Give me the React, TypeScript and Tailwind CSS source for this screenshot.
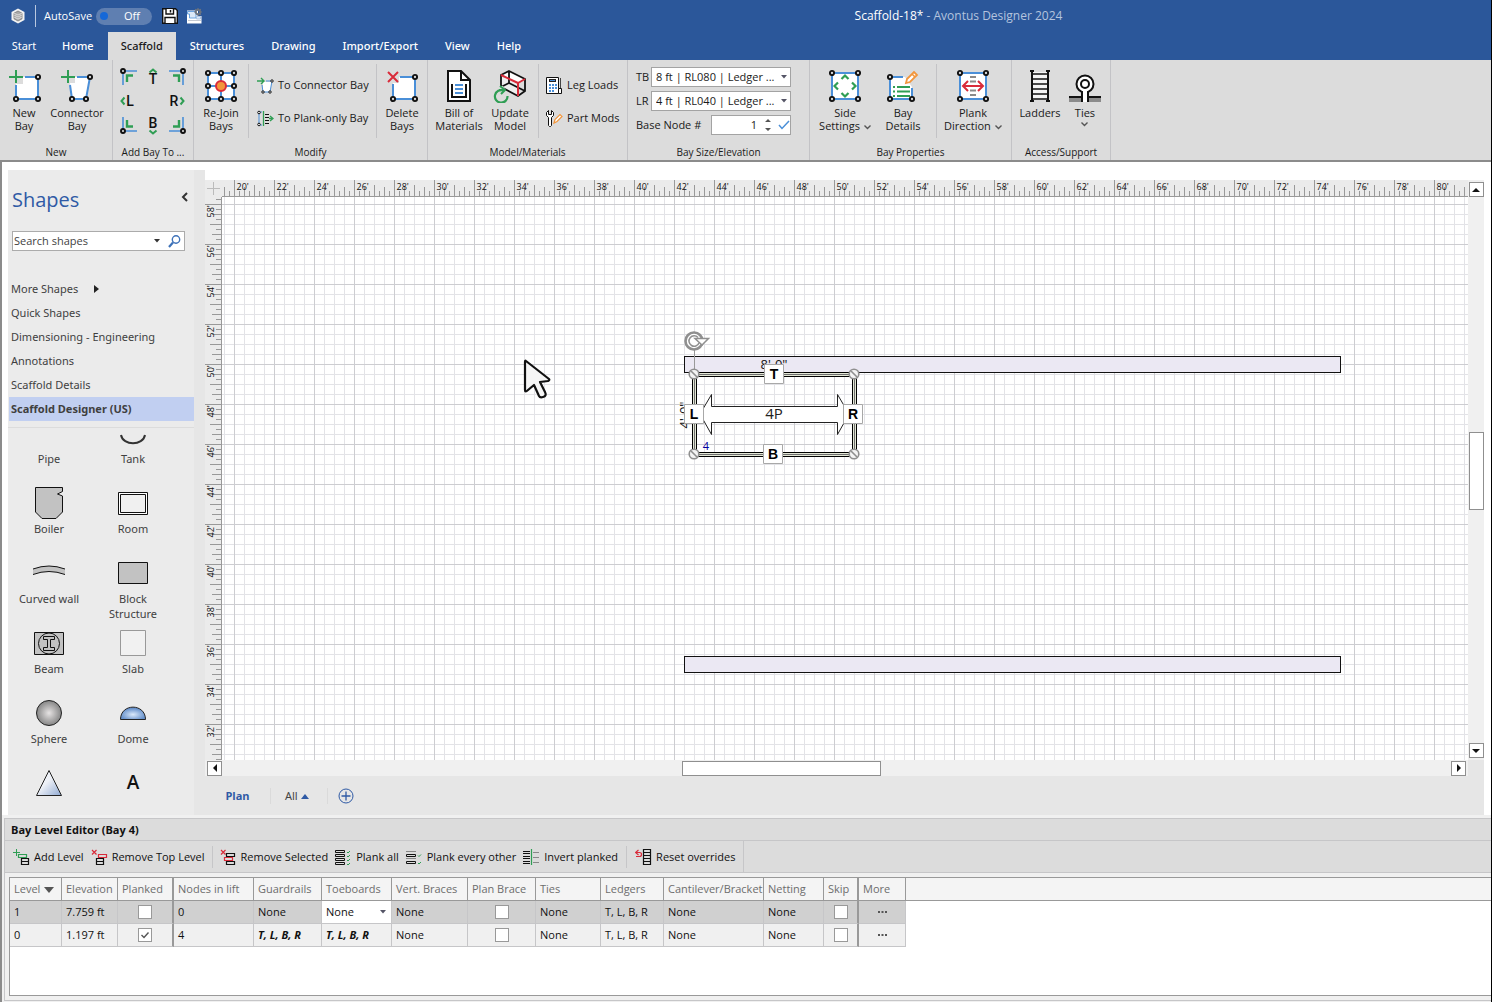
import { useState, type ReactNode } from 'react';
import clsx from 'clsx';

const BLUE = '#4a8fd8';
const GREEN = '#2f9e54';
const RED = '#d92b3a';
const ORANGE = '#f2963c';
const FONT = 'font-["Open_Sans","Noto_Sans",sans-serif]';
const WIDE_FONT = 'font-["Noto_Sans","Open_Sans",sans-serif]';

/* ---------- icons ---------- */

const Node = ({ x, y }: { x: number; y: number }) => (
    <circle cx={x} cy={y} r="2.1" fill="#dcdcdc" stroke="#111" strokeWidth="1.9" />
);

const Big = ({ children }: { children: ReactNode }) => (
    <svg width="36" height="34" viewBox="0 0 36 34" fill="none" aria-hidden="true">{children}</svg>
);

const Small = ({ children }: { children: ReactNode }) => (
    <svg width="17" height="17" viewBox="0 0 17 17" fill="none" className="shrink-0" aria-hidden="true">{children}</svg>
);

const NewBayIcon = () => (
    <Big>
        <path d="M10 8H32V30H10z" fill="#fff" />
        <path d="M19 8H32V30H10V16" stroke={BLUE} strokeWidth="2" />
        <path d="M2 0H17V15H2z" fill="#dcdcdc" />
        <path d="M10 1V14M3 8H17" stroke={GREEN} strokeWidth="2" />
        <Node x={32} y={8} /><Node x={10} y={30} /><Node x={32} y={30} />
    </Big>
);

const ConnectorBayIcon = () => (
    <Big>
        <path d="M10 8H31L27 30H13z" fill="#fff" />
        <path d="M18 8H31L27 30H13L11 16" stroke={BLUE} strokeWidth="2" />
        <path d="M0 0H16V14H0z" fill="#dcdcdc" />
        <path d="M9 1V14M2 8H16" stroke={GREEN} strokeWidth="2" />
        <Node x={31} y={8} /><Node x={13} y={30} /><Node x={27} y={30} />
    </Big>
);

const RejoinIcon = () => (
    <Big>
        <path d="M5 4H31V30H5z" fill="#fff" />
        <path d="M5 4H31V30H5zM18 4V30M5 17H31" stroke={BLUE} strokeWidth="2" />
        {[5, 18, 31].map(x => [4, 17, 30].map(y => <Node key={`${x}-${y}`} x={x} y={y} />))}
        <circle cx="18" cy="17" r="5" fill={ORANGE} stroke={RED} strokeWidth="2" />
    </Big>
);

const DeleteBaysIcon = () => (
    <Big>
        <path d="M9 8H31V30H9z" fill="#fff" />
        <path d="M16 8H31V30H9V15" stroke={BLUE} strokeWidth="2" />
        <path d="M2 1H15V14H2z" fill="#dcdcdc" />
        <path d="M4 3L14 13M14 3L4 13" stroke={RED} strokeWidth="2" />
        <Node x={31} y={8} /><Node x={9} y={30} /><Node x={31} y={30} />
    </Big>
);

const BillIcon = () => (
    <Big>
        <path d="M7 2H20L29 11V32H7z" fill="#fff" stroke="#111" strokeWidth="2" />
        <path d="M20 2V11H29" stroke="#111" strokeWidth="2" />
        <path d="M11 15V28H25V15" stroke="#111" strokeWidth="2" />
        <path d="M14 16H22M14 20H22M14 24H22" stroke={BLUE} strokeWidth="2" />
    </Big>
);

const UpdateIcon = () => (
    <Big>
        <path d="M9 6L17 2L33 10L26 14z" fill="#fff" />
        <path d="M9 6L26 14V27L9 18z" fill="#eee" />
        <path d="M17 2L33 10V22L26 27L9 18V6zM17 2V14L33 22M17 14L9 18" stroke="#111" strokeWidth="1.8" />
        <path d="M9 6L26 14V27M26 14L33 10" stroke={RED} strokeWidth="2" />
        <path d="M1 17H11L14 22V33H1z" fill="#dcdcdc" />
        <path d="M11.5 21.5A6.3 6.3 0 1 0 15.5 27" stroke={GREEN} strokeWidth="2.2" />
        <path d="M8 17L13 21L9 25M13 21H7" stroke={GREEN} strokeWidth="2" />
    </Big>
);

const Frame = () => (
    <>
        <path d="M5 4H31V30H5z" fill="#fff" stroke={BLUE} strokeWidth="2" />
        <Node x={5} y={4} /><Node x={31} y={4} /><Node x={5} y={30} /><Node x={31} y={30} />
    </>
);

const SideSettingsIcon = () => (
    <Big>
        <Frame />
        <path d="M14.5 10L18 6.5L21.5 10M14.5 24L18 27.5L21.5 24M11 13.5L7.5 17L11 20.5M25 13.5L28.5 17L25 20.5" stroke={GREEN} strokeWidth="2.2" />
    </Big>
);

const BayDetailsIcon = () => (
    <Big>
        <path d="M5 8H20L27 18V30H5z" fill="#fff" />
        <path d="M5 8H18M5 8V30H27V19" stroke={BLUE} strokeWidth="2" />
        <path d="M8 18H10M8 22.5H10M8 27H10M12 18H25M12 22.5H25M12 27H25" stroke={GREEN} strokeWidth="2" />
        <path d="M21 14L22 10L29 3L32 6L25 13z" fill="#fff" stroke={ORANGE} strokeWidth="1.8" />
        <path d="M27 5L30 8" stroke={ORANGE} strokeWidth="1.6" />
        <Node x={5} y={8} /><Node x={5} y={30} /><Node x={27} y={30} />
    </Big>
);

const PlankDirectionIcon = () => (
    <Big>
        <Frame />
        <path d="M15 8H21M15 12.5H21M15 21.5H21M15 26H21" stroke="#8a8a8a" strokeWidth="2" />
        <path d="M9 17H27M13 12L8 17L13 22M23 12L28 17L23 22" stroke={RED} strokeWidth="2" />
    </Big>
);

const LadderIcon = () => (
    <Big>
        <path d="M10 3H26V31H10z" fill="#f4f4f4" />
        <path d="M10 2V32M26 2V32M8 2H12M24 2H28M8 32H12M24 32H28" stroke="#111" strokeWidth="2" />
        <path d="M10 5H26M10 10H26M10 15H26M10 20H26M10 25H26M10 30H26" stroke="#111" strokeWidth="1.6" />
    </Big>
);

const TiesIcon = () => (
    <Big>
        <path d="M2 27H34V33H2z" fill="#8b8b8b" />
        <path d="M2 28H34" stroke="#111" strokeWidth="2" />
        <circle cx="18" cy="15" r="8.5" fill="#fff" stroke="#111" strokeWidth="2" />
        <circle cx="18" cy="15" r="4" stroke="#111" strokeWidth="2" />
        <path d="M15 23V33M21 23V33" stroke="#111" strokeWidth="2" />
        <path d="M16 22H20V33H16z" fill="#fff" />
    </Big>
);

const ToConnectorIcon = () => (
    <Small>
        <path d="M6 5H15L13 15H6z" fill="#fff" />
        <path d="M9 4H15L13 15H6L5 8" stroke={BLUE} />
        <path d="M0 4H7M4 1L7 4L4 7" stroke={GREEN} strokeWidth="1.4" />
        {[[15, 4], [13, 15], [6, 15]].map(([x, y]) => (
            <circle key={x} cx={x} cy={y} r="1.2" fill="#fff" stroke="#111" />
        ))}
    </Small>
);

const ToPlankIcon = () => (
    <Small>
        <path d="M2 3V14M2 2H5M2 15H5" stroke={BLUE} />
        <path d="M6.5 1V16M12 8.5H16M13 6L16 8.5L13 11" stroke={GREEN} strokeWidth="1.3" />
        <path d="M8 4.5H12M8 7.5H12M8 10.5H12M8 13.5H12" stroke="#111" />
        <circle cx="2" cy="2.5" r="1.3" fill="#fff" stroke="#111" />
        <circle cx="2" cy="14.5" r="1.3" fill="#fff" stroke="#111" />
    </Small>
);

const LegLoadsIcon = () => (
    <Small>
        <path d="M0.5 0.5H12.5V16.5H0.5z" fill="#fff" stroke="#111" />
        <path d="M3 3.5H10" stroke="#222" strokeWidth="3" />
        <path d="M4 3.5H9" stroke={BLUE} />
        <path d="M3 8H5M6 8H8M9 8H11M3 11H5M6 11H8M9 11H11M3 14H5M6 14H8" stroke={BLUE} strokeWidth="2" />
        <path d="M14.5 1V12" stroke="#444" />
        <path d="M12.5 11.5H15.5V16.5H12.5z" fill="#fff" stroke="#111" />
    </Small>
);

const PartModsIcon = () => (
    <Small>
        <path d="M2.5 0.5L0.5 2.5V5.5L2.5 7.5V15.5L3.5 16.5H4.5L5.5 15.5V7.5L7.5 5.5V2.5L5.5 0.5V4.5H2.5z" fill="#fff" stroke="#111" />
        <path d="M8 13L9 9.5L14 4.5L16 6.5L11 11.5z" fill="#fff" stroke={ORANGE} strokeWidth="1.2" />
    </Small>
);

const Corner = ({ fx, fy }: { fx: number; fy: number }) => (
    <svg width="18" height="18" viewBox="-9 -9 18 18" fill="none" aria-hidden="true">
        <g transform={`scale(${fx} ${fy})`}>
            <path d="M-5 -6H8M-6 -5V8" stroke={BLUE} strokeWidth="1.6" />
            <path d="M-2 5V-1.5H4" stroke={GREEN} strokeWidth="2.4" />
            <circle cx="-6" cy="-6" r="2" fill="#dcdcdc" stroke="#111" strokeWidth="1.9" />
        </g>
    </svg>
);

const SideMark = ({ letter, x, y, caret }: { letter: string; x: number; y: number; caret: string }) => (
    <svg width="18" height="18" viewBox="0 0 18 18" fill="none" className="overflow-visible" aria-hidden="true">
        <text x={x} y={y} fontSize="14" textAnchor="middle" fill="#111" className='font-["Roboto",sans-serif] font-medium'>{letter}</text>
        <path d={caret} stroke={GREEN} strokeWidth="2" />
    </svg>
);

const Chevron = () => (
    <svg width="7" height="5" viewBox="0 0 7 5" fill="none" className="inline-block" aria-hidden="true">
        <path d="M0.5 0.5L3.5 3.5L6.5 0.5" stroke="#555" strokeWidth="1.4" />
    </svg>
);

const Caret = ({ className }: { className: string }) => (
    <svg width="6" height="4" viewBox="0 0 6 4" className={clsx('pointer-events-none absolute', className)} aria-hidden="true">
        <path d="M0 0H6L3 3.5z" fill="#555566" />
    </svg>
);

const AddLevelIcon = () => (
    <Small>
        <path d="M0 3.5H7M3.5 0V7" stroke={GREEN} />
        <path d="M5.5 5.5H13.5V8.5H5.5z" stroke={GREEN} strokeWidth="1.2" />
        <path d="M8.5 9.5H15.5V12.5H8.5zM8.5 12.5H15.5V15.5H8.5z" stroke="#111" strokeWidth="1.2" />
    </Small>
);

const RemoveTopIcon = () => (
    <Small>
        <path d="M1 1L5.5 5.5M5.5 1L1 5.5" stroke={RED} strokeWidth="1.2" />
        <path d="M7.5 5.5H15.5V8.5H7.5z" stroke={RED} strokeWidth="1.2" />
        <path d="M5.5 9.5H12.5V12.5H5.5zM5.5 12.5H12.5V15.5H5.5z" stroke="#111" strokeWidth="1.2" />
    </Small>
);

const RemoveSelectedIcon = () => (
    <Small>
        <path d="M1 1L5.5 5.5M5.5 1L1 5.5" stroke={RED} strokeWidth="1.2" />
        <path d="M6.5 4.5H14.5V7.5H6.5zM6.5 12.5H14.5V15.5H6.5z" stroke="#111" strokeWidth="1.2" />
        <path d="M4.5 8.5H12.5V11.5H4.5z" stroke={RED} strokeWidth="1.2" />
    </Small>
);

const PlankAllIcon = () => (
    <Small>
        <path d="M0.5 1.5H9.5V3.5H0.5zM0.5 5.5H9.5V7.5H0.5zM0.5 9.5H9.5V11.5H0.5zM0.5 13.5H9.5V15.5H0.5z" stroke="#111" />
        <path d="M12 3L13 4L15 2M12 7L13 8L15 6M12 11L13 12L15 10M12 15L13 16L15 14" stroke={GREEN} />
    </Small>
);

const PlankOtherIcon = () => (
    <Small>
        <path d="M0 2.5H10M0 9.5H10" stroke="#888" />
        <path d="M0.5 5.5H9.5V7.5H0.5zM0.5 12.5H9.5V14.5H0.5z" stroke="#111" />
        <path d="M12 6.5L13 7.5L15 5.5M12 14L13 15L15 13" stroke={GREEN} />
    </Small>
);

const InvertIcon = () => (
    <Small>
        <path d="M0 2.5H7M0 4.5H7M0 7.5H7M0 9.5H7M0 12.5H7M0 14.5H7" stroke="#111" strokeWidth="1.1" />
        <path d="M8.5 0V16" stroke={GREEN} strokeWidth="1.2" />
        <path d="M10 3.5H16M10 8.5H16M10 13.5H16" stroke="#888" />
    </Small>
);

const ResetIcon = () => (
    <Small>
        <path d="M0.5 3.5H4.5Q6.5 3.5 6.5 5.5Q6.5 7.5 4.5 7.5H1M3.5 1L0.5 3.5L3.5 6" stroke={RED} strokeWidth="1.2" />
        <path d="M8.5 0.5H15.5V15.5H8.5zM8.5 3.5H15.5M8.5 6.5H15.5M8.5 9.5H15.5M8.5 12.5H15.5" stroke="#111" strokeWidth="1.2" />
    </Small>
);

/* ---------- ribbon ---------- */

const Group = ({ label, width, children }: { label: string; width: string; children: ReactNode }) => (
    <section aria-label={label} className={clsx('flex shrink-0 flex-col border-r border-[#c3c3c6]', width)}>
        <div className="flex h-[84px] items-start pt-1">{children}</div>
        <div className="text-center text-[10px] leading-4">{label}</div>
    </section>
);

const Rule = () => <div className="h-[74px] w-px shrink-0 bg-[#c3c3c6]" />;

const BigButton = ({ icon, lines, width, menu }: { icon: ReactNode; lines: string[]; width: string; menu?: boolean }) => (
    <button className={clsx('flex shrink-0 flex-col items-center pt-[5px] whitespace-nowrap', width)}>
        {icon}
        <span className="mt-[3px] leading-[13px]">
            {lines.map((line, i) => (
                <span key={line} className="block">
                    {line}
                    {menu && i === lines.length - 1 && lines.length > 1 && <span className="ml-1"><Chevron /></span>}
                </span>
            ))}
            {menu && lines.length === 1 && <span className="block leading-2"><Chevron /></span>}
        </span>
    </button>
);

const RowButton = ({ icon, label }: { icon: ReactNode; label: string }) => (
    <button className="flex h-[33px] items-center gap-1 whitespace-nowrap">
        {icon}
        {label}
    </button>
);

const Ribbon = () => (
    <div className="flex h-[102px] shrink-0 overflow-hidden border-b-2 border-[#8b8b8b] bg-[#dcdcdc] text-[11px] text-[#1a1a1a]">
        <Group label="New" width="w-[113px]">
            <BigButton icon={<NewBayIcon />} lines={['New', 'Bay']} width="w-[48px]" />
            <BigButton icon={<ConnectorBayIcon />} lines={['Connector', 'Bay']} width="w-[58px]" />
        </Group>
        <Group label="Add Bay To ..." width="w-[81px]">
            <div className="grid w-full grid-cols-3 gap-x-1.5 gap-y-1.5 px-[7px] pt-1">
                <button aria-label="Top left"><Corner fx={1} fy={1} /></button>
                <button aria-label="Top"><SideMark letter="T" x={9} y={16} caret="M5.5 4.5L9 1.5L12.5 4.5" /></button>
                <button aria-label="Top right"><Corner fx={-1} fy={1} /></button>
                <button aria-label="Left"><SideMark letter="L" x={10} y={14} caret="M4.5 5.5L1.5 9L4.5 12.5" /></button>
                <span />
                <button aria-label="Right"><SideMark letter="R" x={6} y={14} caret="M12.5 5.5L15.5 9L12.5 12.5" /></button>
                <button aria-label="Bottom left"><Corner fx={1} fy={-1} /></button>
                <button aria-label="Bottom"><SideMark letter="B" x={9} y={12} caret="M5.5 14.5L9 17.5L12.5 14.5" /></button>
                <button aria-label="Bottom right"><Corner fx={-1} fy={-1} /></button>
            </div>
        </Group>
        <Group label="Modify" width="w-[234px]">
            <BigButton icon={<RejoinIcon />} lines={['Re-Join', 'Bays']} width="w-[54px]" />
            <Rule />
            <div className="flex w-[127px] flex-col pt-[5px] pl-2">
                <RowButton icon={<ToConnectorIcon />} label="To Connector Bay" />
                <RowButton icon={<ToPlankIcon />} label="To Plank-only Bay" />
            </div>
            <Rule />
            <BigButton icon={<DeleteBaysIcon />} lines={['Delete', 'Bays']} width="w-[50px]" />
        </Group>
        <Group label="Model/Materials" width="w-[200px]">
            <BigButton icon={<BillIcon />} lines={['Bill of', 'Materials']} width="w-[62px]" />
            <BigButton icon={<UpdateIcon />} lines={['Update', 'Model']} width="w-[40px]" />
            <div className="w-2" />
            <Rule />
            <div className="flex flex-col pt-[5px] pl-[7px]">
                <RowButton icon={<LegLoadsIcon />} label="Leg Loads" />
                <RowButton icon={<PartModsIcon />} label="Part Mods" />
            </div>
        </Group>
        <Group label="Bay Size/Elevation" width="w-[182px]">
            <div className="flex w-full flex-col gap-1 pt-[3px] pr-[18px] pl-2">
                {[['TB', '8 ft | RL080 | Ledger ...'], ['LR', '4 ft | RL040 | Ledger ...']].map(([id, text]) => (
                    <div key={id} className="flex h-5 items-center justify-between">
                        <label htmlFor={id}>{id}</label>
                        <div className="relative">
                            <select id={id} className="block h-5 w-[140px] appearance-none border border-[#a3a3a3] bg-white pl-1">
                                <option>{text}</option>
                            </select>
                            <Caret className="top-2 right-1" />
                        </div>
                    </div>
                ))}
                <div className="flex h-5 items-center justify-between">
                    <label htmlFor="node">Base Node #</label>
                    <div className="flex h-5 w-[80px] items-center border border-[#a3a3a3] bg-white">
                        <input id="node" defaultValue="1" className="w-[45px] bg-transparent text-right outline-none" />
                        <svg width="6" height="12" viewBox="0 0 6 12" className="ml-2" aria-hidden="true">
                            <path d="M0 3H6L3 0zM0 9H6L3 12z" fill="#555" />
                        </svg>
                        <svg width="12" height="10" viewBox="0 0 12 10" className="ml-[7px]" fill="none" aria-hidden="true">
                            <path d="M1 5L4 8.5L11 1" stroke={BLUE} strokeWidth="1.5" />
                        </svg>
                    </div>
                </div>
            </div>
        </Group>
        <Group label="Bay Properties" width="w-[202px]">
            <BigButton icon={<SideSettingsIcon />} lines={['Side', 'Settings']} width="w-[70px]" menu />
            <BigButton icon={<BayDetailsIcon />} lines={['Bay', 'Details']} width="w-[46px]" />
            <div className="w-2.5" />
            <Rule />
            <BigButton icon={<PlankDirectionIcon />} lines={['Plank', 'Direction']} width="w-[72px]" menu />
        </Group>
        <Group label="Access/Support" width="w-[99px]">
            <BigButton icon={<LadderIcon />} lines={['Ladders']} width="w-[56px]" />
            <BigButton icon={<TiesIcon />} lines={['Ties']} width="w-[34px]" menu />
        </Group>
    </div>
);

const TitleBar = () => (
    <header className="flex h-8 shrink-0 items-center bg-[#2b579a] text-[11px] text-white">
        <div className="flex w-[426px] shrink-0 items-center pl-2.5">
            <svg width="16" height="16" viewBox="0 0 16 16" aria-hidden="true">
                <path d="M8 0.5L14.5 4V12L8 15.5L1.5 12V4z" fill="#f2f2f2" />
                <path d="M8 3L12 5.2V10.8L8 13L4 10.8V5.2z" fill="#a9a9a9" stroke="#777" strokeWidth="0.8" />
                <path d="M4 7L8 9L12 7M4 9L8 11L12 9M4 5.2L8 7L12 5.2" stroke="#eee" strokeWidth="0.7" fill="none" />
            </svg>
            <div className="mr-2 ml-[9px] h-[22px] w-px bg-[#b9c8e0]" />
            <label htmlFor="autosave" className="mr-1">AutoSave</label>
            <span className="relative inline-flex h-[17px] w-14 items-center rounded-full bg-[#5f7fb1]">
                <input id="autosave" type="checkbox" role="switch" className="absolute inset-0 h-full w-full opacity-0" />
                <span className="ml-1 h-2 w-2 rounded-full bg-[#1668d8]" />
                <span className="ml-4">Off</span>
            </span>
            <button aria-label="Save" className="ml-2.5">
                <svg width="16" height="16" viewBox="0 0 16 16" aria-hidden="true">
                    <path d="M0.7 0.7H13.5L15.3 2.5V15.3H0.7z" fill="#fff" stroke="#111" strokeWidth="1.4" />
                    <path d="M4 1V6H11.5V1M3 15V9.5H13V15" fill="#fff" stroke="#111" strokeWidth="1.4" />
                    <path d="M8.5 2V4.5" stroke="#111" strokeWidth="1.5" />
                </svg>
            </button>
            <button aria-label="Page settings" className="ml-2">
                <svg width="17" height="17" viewBox="0 0 17 17" fill="none" aria-hidden="true">
                    <path d="M1 2.5H12V8H15.5V15.5H1z" fill="#fff" />
                    <path d="M1.5 3.5H10V10H3.5V6H1.5z" fill="#dbe8f7" stroke={BLUE} strokeWidth="0.8" />
                    <path d="M2 12.5H15" stroke="#c4c9d2" />
                    <path d="M10.5 8.5H14.5V11H10.5z" fill="#dbe8f7" stroke="#9db9dd" strokeWidth="0.8" />
                    <circle cx="12" cy="4" r="2.2" stroke="#6d747f" strokeWidth="1.8" />
                    <path d="M12 0V2M12 6V8M8 4H10M14 4H16M9.2 1.2L10.5 2.5M13.5 5.5L14.8 6.8M14.8 1.2L13.5 2.5" stroke="#6d747f" strokeWidth="1.2" />
                </svg>
            </button>
        </div>
        <h1 className="flex-1 text-center text-xs">
            Scaffold-18* <span className="text-[#b4c4de]">- Avontus Designer 2024</span>
        </h1>
    </header>
);

const TABS = ['Home', 'Scaffold', 'Structures', 'Drawing', 'Import/Export', 'View', 'Help'];

const TabStrip = () => {
    const [active, setActive] = useState('Scaffold');
    return (
        <nav className={clsx('flex h-7 shrink-0 gap-px bg-[#2b579a] text-[11px] font-medium text-white', WIDE_FONT)}>
            <button className="w-12 font-normal">Start</button>
            {TABS.map(tab => (
                <button
                    key={tab}
                    onClick={() => setActive(tab)}
                    className={clsx('px-[13px]', active === tab && 'bg-[#dcdcdc] text-[#1a1a1a]')}
                >
                    {tab}
                </button>
            ))}
        </nav>
    );
};

/* ---------- shapes panel ---------- */

const STENCILS = ['Quick Shapes', 'Dimensioning - Engineering', 'Annotations', 'Scaffold Details', 'Scaffold Designer (US)'];

const Glyph = ({ children }: { children?: ReactNode }) => (
    <svg width="36" height="36" viewBox="0 0 36 36" fill="none" className="block" aria-hidden="true">{children}</svg>
);

const SHAPES: { label: string; icon: ReactNode }[] = [
    {
        label: 'Boiler',
        icon: <Glyph><path d="M4.5 2.5H31.5V6.5L26.5 9L31.5 11V27L25 33.5H11L4.5 27z" fill="#c2c2c2" stroke="#111" /></Glyph>,
    },
    {
        label: 'Room',
        icon: <Glyph><path d="M3.5 7.5H32.5V29.5H3.5z" fill="#fff" stroke="#111" /><path d="M5.5 9.5H30.5V27.5H5.5z" fill="#f0f0f0" stroke="#111" /></Glyph>,
    },
    {
        label: 'Curved wall',
        icon: <Glyph><path d="M2 14Q18 8 34 14V19.5Q18 13.5 2 19.5z" fill="#c2c2c2" /><path d="M2 14Q18 8 34 14M2 19.5Q18 13.5 34 19.5" stroke="#111" /></Glyph>,
    },
    {
        label: 'Block Structure',
        icon: <Glyph><path d="M3.5 7.5H32.5V28.5H3.5z" fill="#c2c2c2" stroke="#111" /></Glyph>,
    },
    {
        label: 'Beam',
        icon: (
            <Glyph>
                <path d="M3.5 7.5H32.5V29.5H3.5z" fill="#c2c2c2" stroke="#111" />
                <circle cx="18" cy="18.5" r="10.5" stroke="#111" />
                <path d="M12.5 11.5H23.5V14.5H19.5V22.5H23.5V25.5H12.5V22.5H16.5V14.5H12.5z" stroke="#111" />
            </Glyph>
        ),
    },
    {
        label: 'Slab',
        icon: <Glyph><path d="M5.5 5.5H30.5V30.5H5.5z" fill="#f1f1f1" stroke="#999" /></Glyph>,
    },
    {
        label: 'Sphere',
        icon: <Glyph><circle cx="18" cy="18" r="12.5" fill="url(#sphere)" stroke="#222" /></Glyph>,
    },
    {
        label: 'Dome',
        icon: <Glyph><path d="M5.5 24.5C5.5 8 30.5 8 30.5 24.5z" fill="url(#dome)" stroke="#222" /></Glyph>,
    },
    {
        label: '',
        icon: <Glyph><path d="M18 5.5L30.5 30.5H5.5z" fill="url(#cone)" stroke="#222" /></Glyph>,
    },
    {
        label: '',
        icon: <Glyph><text x="18" y="24" textAnchor="middle" fontSize="19" fill="#111" className='font-["Open_Sans",sans-serif] font-semibold'>A</text></Glyph>,
    },
];

const ShapesPanel = () => {
    const [active, setActive] = useState('Scaffold Designer (US)');
    return (
        <aside className="flex w-[197px] shrink-0 flex-col border-r-[11px] border-[#e6e6e6] bg-[#ebebeb] text-[11px] text-[#3f3f3f]">
            <div className="flex items-start justify-between pt-4 pr-1.5 pl-1">
                <h2 className="text-[20px] leading-7 text-[#2f5aa5]">Shapes</h2>
                <button aria-label="Collapse" className="pt-1.5">
                    <svg width="7" height="10" viewBox="0 0 7 10" fill="none" className="block"><path d="M6 1L2 5L6 9" stroke="#333" strokeWidth="2" /></svg>
                </button>
            </div>
            <div className="mt-[17px] mr-[9px] ml-[4px] flex h-5 items-center border border-[#ababab] bg-white">
                <input aria-label="Search shapes" defaultValue="Search shapes" className="min-w-0 flex-1 bg-transparent pl-px outline-none" />
                <svg width="6" height="4" viewBox="0 0 6 4" aria-hidden="true"><path d="M0 0H6L3 3.5z" fill="#333" /></svg>
                <button aria-label="Search" className="mr-[3px] ml-2">
                    <svg width="13" height="13" viewBox="0 0 13 13" fill="none" className="block">
                        <circle cx="8" cy="4.5" r="3.7" stroke="#3d71b8" strokeWidth="1.4" />
                        <path d="M5 7.5L1 12" stroke="#3d71b8" strokeWidth="2.2" />
                    </svg>
                </button>
            </div>
            <nav className={clsx('mt-[26px] flex flex-col border-b border-[#dcdcdc] pb-[6px]', WIDE_FONT)}>
                <button className="flex h-6 items-center gap-4 pl-[3px] text-left">
                    More Shapes
                    <svg width="5" height="8" viewBox="0 0 5 8" aria-hidden="true"><path d="M0 0L5 4L0 8z" fill="#222" /></svg>
                </button>
                {STENCILS.map(name => (
                    <button
                        key={name}
                        onClick={() => setActive(name)}
                        className={clsx('ml-px h-6 pl-[2px] text-left', active === name && 'bg-[#c1cff1] font-bold')}
                    >
                        {name}
                    </button>
                ))}
            </nav>
            <div className={clsx('grid flex-1 auto-rows-[70px] grid-cols-[82px_86px] content-start overflow-hidden pt-[6px] text-center leading-[15px] [grid-template-rows:51px]', WIDE_FONT)}>
                <div className="pt-[17px]">Pipe</div>
                <div className="flex flex-col items-center">
                    <svg width="28" height="17" viewBox="0 0 28 17" fill="none" aria-hidden="true">
                        <path d="M2 1C4 12 24 12 26 1" stroke="#333" strokeWidth="2" />
                    </svg>
                    Tank
                </div>
                {SHAPES.map(({ label, icon }, i) => (
                    <div key={i} className="flex flex-col items-center">
                        {icon}
                        <span className="w-[66px] text-center">{label}</span>
                    </div>
                ))}
            </div>
        </aside>
    );
};

/* ---------- drawing area ---------- */

const tickLength = (offset: number) => {
    if (offset % 40 === 0) return 17;
    if (offset % 20 === 0) return 12;
    if (offset % 10 === 0) return 10;
    return 6;
};

const TICKS = Array.from({ length: 520 }, (_, i) => (i - 8) * 5);
const FEET_ACROSS = Array.from({ length: 31 }, (_, i) => 20 + i * 2);
const FEET_DOWN = Array.from({ length: 14 }, (_, i) => 58 - i * 2);

const TopRuler = () => (
    <svg width="100%" height="17" className="block min-w-0 flex-1 bg-[#ebebeb]" aria-hidden="true">
        <g transform="translate(12.5 0)">
            <path d={TICKS.map(t => `M${t} 17V${17 - tickLength(t)}`).join('')} stroke="#999" />
            {FEET_ACROSS.map((feet, i) => (
                <text key={feet} x={i * 40 + 2} y="10" fontSize="9" fill="#111">{`${feet}'`}</text>
            ))}
        </g>
        <path d="M0 16.5H4000" stroke="#999" />
    </svg>
);

const SideRuler = () => (
    <svg width="17" height="100%" className="block shrink-0 bg-[#ebebeb]" aria-hidden="true">
        <g transform="translate(0 7.5)">
            <path d={TICKS.map(t => `M17 ${t}H${17 - tickLength(t)}`).join('')} stroke="#999" />
            {FEET_DOWN.map((feet, i) => (
                <text key={feet} transform={`translate(9 ${i * 40 + 13}) rotate(-90)`} fontSize="9" fill="#111">{`${feet}'`}</text>
            ))}
        </g>
        <path d="M16.5 0V4000" stroke="#999" />
    </svg>
);

const Handle = ({ x, y }: { x: number; y: number }) => (
    <g>
        <circle cx={x} cy={y} r="4.8" fill="#f4f4f4" stroke="#8f8f8f" strokeWidth="1.6" />
        <path d={`M${x - 3} ${y - 3}L${x + 3} ${y + 3}`} stroke="#8f8f8f" strokeWidth="1.6" />
    </g>
);

const SideTag = ({ x, y, letter }: { x: number; y: number; letter: string }) => (
    <g>
        <path d={`M${x - 9.5} ${y - 9.5}h19v19h-19z`} fill="#fff" stroke="#a8a8a8" />
        <text x={x} y={y + 5} fontSize="14" textAnchor="middle" fill="#000" className='font-["Liberation_Sans",sans-serif] font-bold'>{letter}</text>
    </g>
);

const Drawing = () => (
    <svg width="100%" height="100%" className="block min-w-0 flex-1 bg-white" aria-label="Plan drawing">
        <defs>
            <pattern id="minor" x="12" y="7" width="10" height="10" patternUnits="userSpaceOnUse">
                <path d="M0.5 0V10M0 0.5H10" stroke="#e3e3e7" />
            </pattern>
            <pattern id="major" x="12" y="7" width="40" height="40" patternUnits="userSpaceOnUse">
                <path d="M0.5 0V40M0 0.5H40" stroke="#cdcdd1" />
            </pattern>
        </defs>
        <rect width="100%" height="100%" fill="url(#minor)" />
        <rect width="100%" height="100%" fill="url(#major)" />

        <rect x="462.5" y="159.5" width="656" height="16" fill="#ebe8f3" stroke="#111" />
        <rect x="462.5" y="459.5" width="656" height="16" fill="#ebe8f3" stroke="#111" />

        <text x="552" y="172" fontSize="13" textAnchor="middle" fill="#111">8'-0"</text>
        <text transform="translate(467 218) rotate(-90)" fontSize="13" textAnchor="middle" fill="#111">4'-0"</text>
        <rect x="472.5" y="177.5" width="160" height="80" fill="none" stroke="#000" strokeWidth="5" />
        <rect x="472.5" y="177.5" width="160" height="80" fill="none" stroke="#e4e8d6" strokeWidth="3" />
        <rect x="472.5" y="177.5" width="160" height="80" fill="none" stroke="#6f6f6f" />
        <path d="M478 217L489.5 197.5V209.5H615.5V197.5L627 217L615.5 237.5V225.5H489.5V237.5z" fill="#fff" stroke="#222" />
        <text x="552" y="222" fontSize="15" textAnchor="middle" fill="#222">4P</text>
        <text x="484" y="253" fontSize="11" textAnchor="middle" fill="#0000a0">4</text>

        <path d="M472.5 153V172" stroke="#999" />
        <circle cx="472" cy="144" r="8.5" fill="#fff" stroke="#8f8f8f" strokeWidth="2.6" />
        <path d="M476 140.5A5.2 5.2 0 1 0 477 146" fill="none" stroke="#8f8f8f" strokeWidth="1.5" />
        <path d="M473 141.5H486.5L480 148z" fill="#fff" stroke="#8f8f8f" strokeWidth="1.5" />

        <Handle x={472} y={177} /><Handle x={632} y={177} /><Handle x={472} y={257} /><Handle x={632} y={257} />
        <SideTag x={552} y={177} letter="T" />
        <SideTag x={472} y={217} letter="L" />
        <SideTag x={631} y={217} letter="R" />
        <SideTag x={551} y={257} letter="B" />

        <path d="M304 164Q303 163 303 165V193Q303 196 306 193L312 188L317 199Q318 201 321 200Q325 199 323 195L318 185L326 184Q328 183 327 182z" fill="#f6f6f6" stroke="#111" strokeWidth="2.2" strokeLinejoin="round" />
    </svg>
);

const ScrollButton = ({ label, path }: { label: string; path: string }) => (
    <button aria-label={label} className="flex h-[15px] w-[15px] shrink-0 items-center justify-center border border-[#8f8f8f] bg-white">
        <svg width="8" height="8" viewBox="0 0 8 8"><path d={path} fill="#111" /></svg>
    </button>
);

const PageTabs = () => (
    <div className="flex h-[39px] shrink-0 items-center bg-[#e6e6e6] pt-px text-[11px] text-[#444]">
        <button className="w-[65px] font-bold text-[#2f5aa5]">Plan</button>
        <div className="h-4 w-px bg-[#dadada]" />
        <button className={clsx('flex w-14 items-center gap-[3px] pl-3.5', WIDE_FONT)}>
            All
            <svg width="8" height="5" viewBox="0 0 8 5" aria-hidden="true"><path d="M0 5H8L4 0z" fill="#2f5aa5" /></svg>
        </button>
        <div className="h-4 w-px bg-[#dadada]" />
        <button aria-label="Add page" className="ml-2.5">
            <svg width="16" height="16" viewBox="0 0 16 16" fill="none" className="block">
                <circle cx="8" cy="8" r="7" stroke="#2f5aa5" />
                <path d="M8 3.5V12.5M3.5 8H12.5" stroke="#2f5aa5" strokeWidth="1.3" />
            </svg>
        </button>
    </div>
);

const Workspace = () => (
    <div className="flex min-w-0 flex-1 flex-col bg-[#e6e6e6]">
        <div className="h-2.5 shrink-0 bg-white" />
        <div className="flex min-h-0 flex-1">
            <div className="flex min-w-0 flex-1 flex-col">
                <div className="flex h-[17px] shrink-0">
                    <svg width="17" height="17" className="shrink-0 bg-[#ebebeb]" aria-hidden="true">
                        <path d="M8.5 2V15M2 8.5H15" stroke="#bbb" />
                    </svg>
                    <TopRuler />
                </div>
                <div className="flex min-h-0 flex-1">
                    <SideRuler />
                    <Drawing />
                </div>
            </div>
            <div className="flex w-4 shrink-0 flex-col items-center bg-[#f0f0f0] pt-[2px] pb-[2px]">
                <ScrollButton label="Scroll up" path="M0 6H8L4 2z" />
                <div className="flex w-full flex-1 flex-col items-center">
                    <div className="basis-[43%]" />
                    <div className="h-[78px] w-[15px] border border-[#8f8f8f] bg-white" />
                </div>
                <ScrollButton label="Scroll down" path="M0 2H8L4 6z" />
            </div>
        </div>
        <div className="mr-4 flex h-4 shrink-0 items-center bg-[#f0f0f0] pr-0.5 pl-0.5">
            <ScrollButton label="Scroll left" path="M6 0V8L2 4z" />
            <div className="flex flex-1">
                <div className="basis-[37.4%]" />
                <div className="h-[15px] w-[199px] border border-[#8f8f8f] bg-white" />
            </div>
            <ScrollButton label="Scroll right" path="M2 0V8L6 4z" />
        </div>
        <PageTabs />
    </div>
);

/* ---------- level editor ---------- */

type Level = {
    level: string; elevation: string; planked: boolean; nodes: string; guardrails: string; toeboards: string; current: boolean;
};

const LEVELS: Level[] = [
    { level: '1', elevation: '7.759 ft', planked: false, nodes: '0', guardrails: 'None', toeboards: 'None', current: true },
    { level: '0', elevation: '1.197 ft', planked: true, nodes: '4', guardrails: 'T, L, B, R', toeboards: 'T, L, B, R', current: false },
];

const COLUMNS: [string, string][] = [
    ['Level', 'w-[52px]'], ['Elevation', 'w-[56px]'], ['Planked', 'w-[56px]'], ['Nodes in lift', 'w-[80px]'],
    ['Guardrails', 'w-[68px]'], ['Toeboards', 'w-[70px]'], ['Vert. Braces', 'w-[76px]'], ['Plan Brace', 'w-[68px]'],
    ['Ties', 'w-[65px]'], ['Ledgers', 'w-[63px]'], ['Cantilever/Bracket', 'w-[100px]'], ['Netting', 'w-[60px]'],
    ['Skip', 'w-[35px]'], ['More', 'w-[47px]'],
];

const heavy = (i: number) => i === 2 || i === 12;

const Tick = ({ label, on = false }: { label: string; on?: boolean }) => {
    const [checked, setChecked] = useState(on);
    return (
        <span className="relative mx-auto block h-3.5 w-3.5">
            <input
                type="checkbox"
                aria-label={label}
                checked={checked}
                onChange={e => setChecked(e.target.checked)}
                className="block h-3.5 w-3.5 appearance-none border border-[#999] bg-white"
            />
            {checked && (
                <svg width="14" height="14" viewBox="0 0 14 14" fill="none" className="pointer-events-none absolute inset-0">
                    <path d="M3.5 7L6 9.5L10.5 4.5" stroke="#555" strokeWidth="1.4" />
                </svg>
            )}
        </span>
    );
};

const LevelRow = ({ row }: { row: Level }) => {
    const changed = row.guardrails !== 'None' && 'font-bold italic';
    const cells: ReactNode[] = [
        row.level,
        row.elevation,
        <Tick label={`Planked, level ${row.level}`} on={row.planked} />,
        row.nodes,
        <span className={clsx(changed)}>{row.guardrails}</span>,
        row.current ? (
            <span className="relative -mx-1 block h-[22px] bg-white">
                <select aria-label="Toeboards" className="block h-[22px] w-full appearance-none bg-transparent pl-1">
                    <option>{row.toeboards}</option>
                </select>
                <Caret className="top-[9px] right-[5px]" />
            </span>
        ) : <span className={clsx(changed)}>{row.toeboards}</span>,
        'None',
        <Tick label={`Plan brace, level ${row.level}`} />,
        'None',
        'T, L, B, R',
        'None',
        'None',
        <Tick label={`Skip, level ${row.level}`} />,
        <button aria-label="More" className="mx-auto block">
            <svg width="9" height="2" viewBox="0 0 9 2" className="block"><path d="M0 0H2V2H0zM3.5 0H5.5V2H3.5zM7 0H9V2H7z" fill="#555" /></svg>
        </button>,
    ];
    return (
        <tr className={clsx('h-[23px] text-[#111]', row.current ? 'bg-[#d0d0d0]' : 'bg-[#f0f0f0]')}>
            {cells.map((cell, i) => (
                <td
                    key={i}
                    className={clsx('border-b border-[#c6c6c8] px-1 py-0', heavy(i) ? 'border-r-2 border-r-[#999]' : 'border-r')}
                >
                    {cell}
                </td>
            ))}
        </tr>
    );
};

const ToolButton = ({ icon, label }: { icon: ReactNode; label: string }) => (
    <button className="flex items-center gap-1 whitespace-nowrap">{icon}{label}</button>
);

const LevelEditor = () => (
    <section className="shrink-0 bg-[#f0f0f0] pt-[3px] pb-px pl-0.5 text-[11px] text-[#111]">
        <div className="border-y border-l border-[#c6c6c8]">
            <h2 className="h-[22px] border-b border-[#c6c6c8] bg-[#dcdcdc] pl-1.5 leading-[22px] font-bold">Bay Level Editor (Bay 4)</h2>
            <div className="flex h-8 border-b border-[#c6c6c8] bg-[#dcdcdc]">
                <div className="flex items-center gap-[7px] border-r border-[#c6c6c8] pt-px pr-2 pl-2">
                    <ToolButton icon={<AddLevelIcon />} label="Add Level" />
                    <ToolButton icon={<RemoveTopIcon />} label="Remove Top Level" />
                    <div className="h-[22px] w-px bg-[#c6c6c8]" />
                    <ToolButton icon={<RemoveSelectedIcon />} label="Remove Selected" />
                    <ToolButton icon={<PlankAllIcon />} label="Plank all" />
                    <ToolButton icon={<PlankOtherIcon />} label="Plank every other" />
                    <ToolButton icon={<InvertIcon />} label="Invert planked" />
                    <div className="mx-px h-[22px] w-px bg-[#c6c6c8]" />
                    <ToolButton icon={<ResetIcon />} label="Reset overrides" />
                </div>
            </div>
            <div className="mt-1 mb-1 ml-1 min-h-[119px] border border-r-0 border-[#999] bg-white">
                <table className="w-full table-fixed border-separate border-spacing-0 text-left">
                    <thead>
                        <tr className="h-[23px] bg-[#f4f4f4] whitespace-nowrap text-[#6d6d6d]">
                            {COLUMNS.map(([name, width], i) => (
                                <th
                                    key={name}
                                    scope="col"
                                    className={clsx('border-b border-[#999] px-1 py-0 font-normal', width, heavy(i) ? 'border-r-2' : 'border-r')}
                                >
                                    {name}
                                    {i === 0 && (
                                        <svg width="10" height="6" viewBox="0 0 10 6" className="ml-1 inline-block"><path d="M0 0H10L5 6z" fill="#555" /></svg>
                                    )}
                                </th>
                            ))}
                            <td className="border-b border-[#999]" />
                        </tr>
                    </thead>
                    <tbody>
                        {LEVELS.map(row => <LevelRow key={row.level} row={row} />)}
                    </tbody>
                </table>
            </div>
        </div>
    </section>
);

const App = () => (
    <div className={clsx('flex h-screen flex-col overflow-hidden border-r border-black bg-white', FONT)}>
        <svg width="0" height="0" className="absolute" aria-hidden="true">
            <defs>
                <radialGradient id="sphere"><stop offset="0" stopColor="#e6e3e3" /><stop offset="1" stopColor="#858585" /></radialGradient>
                <radialGradient id="dome" cy="0.6"><stop offset="0" stopColor="#dbe9fa" /><stop offset="1" stopColor="#6691cc" /></radialGradient>
                <linearGradient id="cone" x1="0.2" y1="0.2" x2="1" y2="1"><stop offset="0.3" stopColor="#eef1f7" /><stop offset="1" stopColor="#8fa9d2" /></linearGradient>
            </defs>
        </svg>
        <TitleBar />
        <TabStrip />
        <Ribbon />
        <div className="flex min-h-0 flex-1 flex-col border-l-2 border-[#8b8b8b]">
            <main className="flex min-h-0 flex-1 pt-2 pr-[7px] pl-1.5">
                <ShapesPanel />
                <Workspace />
            </main>
            <LevelEditor />
        </div>
    </div>
);

export default App;
